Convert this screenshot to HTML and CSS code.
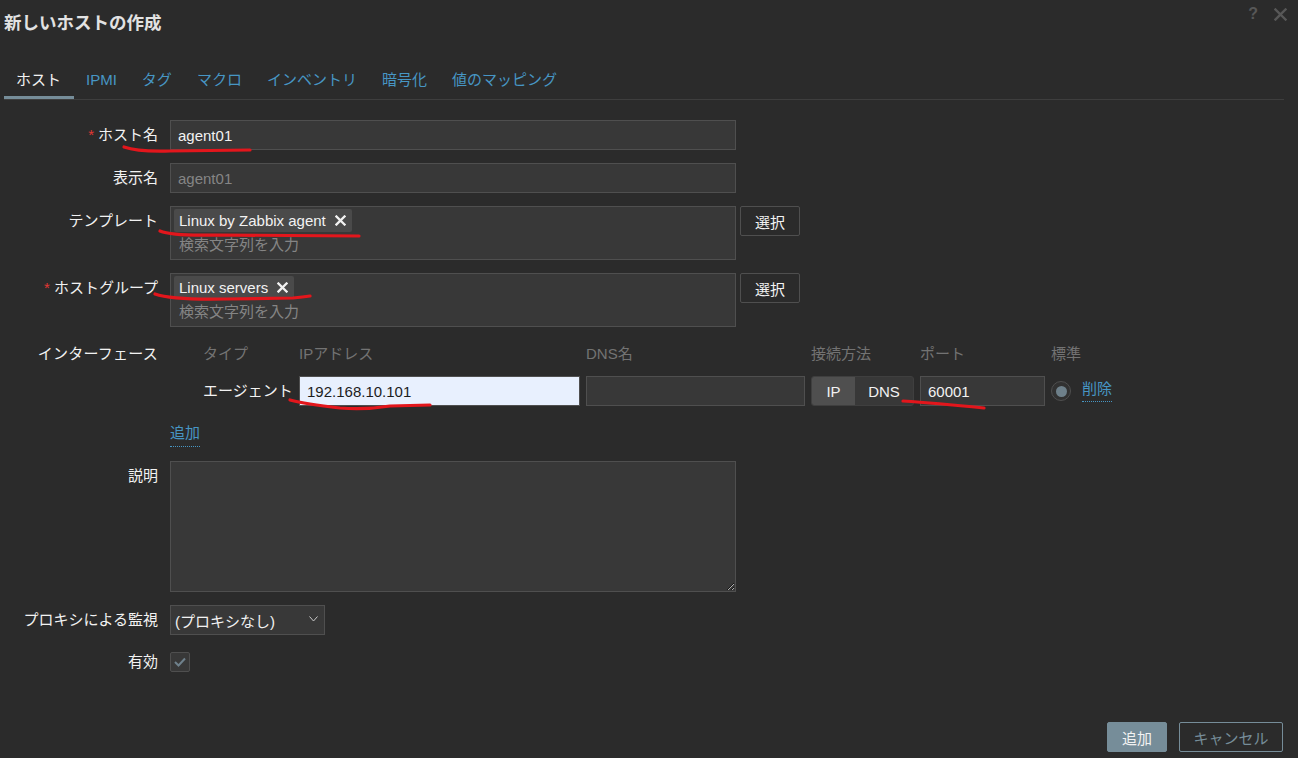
FILE: index.html
```html
<!DOCTYPE html>
<html lang="ja">
<head>
<meta charset="utf-8">
<title>新しいホストの作成</title>
<link rel="stylesheet" href="styles.css">
</head>
<body>
<div class="dialog">
  <header class="head">
    <h1 class="title">新しいホストの作成</h1>
    <div class="head-icons">
      <span class="ico-help">?</span>
      <svg class="ico-close" width="13" height="13" viewBox="0 0 13 13"><path d="M1.5 1.5 L11.5 11.5 M11.5 1.5 L1.5 11.5" stroke="#575757" stroke-width="2.4" stroke-linecap="square"/></svg>
    </div>
  </header>

  <nav class="tabs">
    <a class="tab active">ホスト</a>
    <a class="tab">IPMI</a>
    <a class="tab">タグ</a>
    <a class="tab">マクロ</a>
    <a class="tab">インベントリ</a>
    <a class="tab">暗号化</a>
    <a class="tab">値のマッピング</a>
  </nav>

  <form class="form">
    <label class="lbl req">ホスト名</label>
    <div class="fld"><input class="inp" type="text" value="agent01"></div>

    <label class="lbl">表示名</label>
    <div class="fld"><input class="inp" type="text" placeholder="agent01"></div>

    <label class="lbl">テンプレート</label>
    <div class="fld fld-btn">
      <div class="ms">
        <div class="ms-tags">
          <span class="tag">Linux by Zabbix agent
            <svg class="tag-x" width="11" height="11" viewBox="0 0 11 11"><path d="M1.5 1.5 L9.5 9.5 M9.5 1.5 L1.5 9.5" stroke="#f2f2f2" stroke-width="2.3" stroke-linecap="square"/></svg>
          </span>
        </div>
        <div class="ms-ph">検索文字列を入力</div>
      </div>
      <button type="button" class="btn-alt">選択</button>
    </div>

    <label class="lbl req">ホストグループ</label>
    <div class="fld fld-btn">
      <div class="ms">
        <div class="ms-tags">
          <span class="tag">Linux servers
            <svg class="tag-x" width="11" height="11" viewBox="0 0 11 11"><path d="M1.5 1.5 L9.5 9.5 M9.5 1.5 L1.5 9.5" stroke="#f2f2f2" stroke-width="2.3" stroke-linecap="square"/></svg>
          </span>
        </div>
        <div class="ms-ph">検索文字列を入力</div>
      </div>
      <button type="button" class="btn-alt">選択</button>
    </div>

    <label class="lbl lbl-iface">インターフェース</label>
    <div class="fld">
      <div class="ifc-grid ifc-head">
        <span></span>
        <span>タイプ</span>
        <span>IPアドレス</span>
        <span>DNS名</span>
        <span>接続方法</span>
        <span>ポート</span>
        <span>標準</span>
      </div>
      <div class="ifc-grid ifc-row">
        <span></span>
        <span class="ifc-type">エージェント</span>
        <span><input class="inp inp-ip" type="text" value="192.168.10.101"></span>
        <span><input class="inp inp-dns" type="text" value=""></span>
        <span class="toggle"><span class="tg tg-on">IP</span><span class="tg">DNS</span></span>
        <span><input class="inp inp-port" type="text" value="60001"></span>
        <span class="def">
          <span class="radio"><span class="radio-dot"></span></span>
          <a class="link">削除</a>
        </span>
      </div>
      <div class="add-wrap"><a class="link link-add">追加</a></div>
    </div>

    <label class="lbl">説明</label>
    <div class="fld"><textarea class="ta"></textarea></div>

    <label class="lbl">プロキシによる監視</label>
    <div class="fld">
      <div class="sel">
        <span>(プロキシなし)</span>
        <svg width="9" height="6" viewBox="0 0 9 6"><polyline points="0.5,0.5 4.5,5 8.5,0.5" fill="none" stroke="#c8c8c8" stroke-width="1"/></svg>
      </div>
    </div>

    <label class="lbl lbl-chk">有効</label>
    <div class="fld fld-chk">
      <span class="chk">
        <svg width="12" height="10" viewBox="0 0 12 10"><polyline points="1,5 4.5,8.5 11,1.5" fill="none" stroke="#6f818c" stroke-width="2"/></svg>
      </span>
    </div>
  </form>

  <footer class="foot">
    <button type="button" class="btn btn-primary">追加</button>
    <button type="button" class="btn btn-cancel">キャンセル</button>
  </footer>

  <svg class="marks" width="1298" height="758" viewBox="0 0 1298 758">
    <g fill="none" stroke="#e3161c" stroke-width="3.2" stroke-linecap="round" stroke-linejoin="round">
      <path d="M124 147 Q138 152 170 151 L250 150"/>
      <path d="M160 231 Q172 236 215 235 L359 236"/>
      <path d="M155 294 Q172 300 225 299 L293 298 Q303 297 310 296"/>
      <path d="M290 400 Q305 404 340 408 Q365 410 390 406 L430 405"/>
      <path d="M903 401 Q935 403 984 408"/>
    </g>
  </svg>
</div>
</body>
</html>
```

FILE: styles.css
```css
html, body {
  margin: 0;
  padding: 0;
  background: #2b2b2b;
}

body {
  font-family: "Liberation Sans", "Noto Sans CJK JP", sans-serif;
  font-size: 15px;
  color: #f2f2f2;
}

.dialog {
  position: relative;
  box-sizing: border-box;
  height: 758px;
  padding: 0 14px 0 4px;
  display: flex;
  flex-direction: column;
  overflow: hidden;
}

/* header */
.head {
  height: 46px;
  display: flex;
  align-items: center;
  justify-content: space-between;
}

.title {
  margin: 0;
  font-size: 17.5px;
  font-weight: bold;
  line-height: 46px;
  color: #e2e2e2;
}

.head-icons {
  display: flex;
  align-items: center;
  gap: 16px;
  margin-right: -3px;
  margin-top: -18px;
}

.ico-help {
  font-size: 16px;
  font-weight: bold;
  color: #575757;
  line-height: 16px;
}

.ico-close {
  display: block;
}

/* tabs */
.tabs {
  display: flex;
  margin-top: 17px;
  border-bottom: 1px solid #3e3e3e;
}

.tab {
  padding: 8px 12.5px 7px;
  line-height: 18px;
  color: #4796c4;
  border-bottom: 3px solid transparent;
  text-decoration: none;
  white-space: nowrap;
}

.tab.active {
  padding-left: 12px;
  color: #f2f2f2;
  border-bottom-color: #768d99;
}

/* form */
.form {
  flex: 1;
  display: grid;
  grid-template-columns: 154px 1fr;
  column-gap: 12px;
  row-gap: 13px;
  align-content: start;
  padding-top: 20px;
}

.lbl {
  text-align: right;
  line-height: 30px;
  white-space: nowrap;
  color: #f2f2f2;
}

.req::before {
  content: "*";
  color: #e33734;
  margin-right: 4px;
}

.lbl-iface {
  line-height: 28px;
  letter-spacing: 0.25px;
}

.lbl-chk {
  margin-top: -1px;
}

.fld {
  min-width: 0;
}

.fld-btn {
  display: flex;
  align-items: flex-start;
  gap: 4px;
}

.inp {
  box-sizing: border-box;
  display: block;
  width: 566px;
  height: 30px;
  margin: 0;
  padding: 0 7px;
  background: #383838;
  border: 1px solid #4f4f4f;
  border-radius: 0;
  color: #f2f2f2;
  font-family: inherit;
  font-size: 15px;
  outline: none;
}

.inp::placeholder {
  color: #858585;
  opacity: 1;
}

/* multiselect */
.ms {
  box-sizing: border-box;
  width: 566px;
  height: 54px;
  padding: 2px 3px;
  background: #383838;
  border: 1px solid #4f4f4f;
}

.ms-tags {
  display: flex;
  height: 23px;
}

.tag {
  display: inline-flex;
  align-items: center;
  gap: 9px;
  height: 23px;
  padding: 0 6px 0 5px;
  background: #4a4a4a;
  border-radius: 2px;
  line-height: 18px;
  color: #f2f2f2;
  white-space: nowrap;
}

.tag-x {
  display: block;
}

.ms-ph {
  padding-left: 5px;
  line-height: 26px;
  color: #858585;
}

.btn-alt {
  box-sizing: border-box;
  width: 60px;
  height: 30px;
  margin: 0;
  padding: 0;
  background: #2b2b2b;
  border: 1px solid #4f4f4f;
  border-radius: 2px;
  color: #f2f2f2;
  font-family: inherit;
  font-size: 15px;
}

/* interfaces */
.ifc-grid {
  display: grid;
  grid-template-columns: 33px 96px 287px 225px 109px 131px auto;
  align-items: center;
}

.ifc-head {
  height: 28px;
  line-height: 28px;
  color: #737373;
  white-space: nowrap;
}

.ifc-row {
  margin-top: 8px;
  height: 30px;
}

.ifc-type {
  line-height: 30px;
  white-space: nowrap;
}

.inp-ip {
  width: 281px;
  background: #e8f0fe;
  color: #1c1c1c;
}

.inp-dns {
  width: 219px;
}

.inp-port {
  width: 125px;
}

.toggle {
  box-sizing: border-box;
  display: flex;
  width: 103px;
  height: 30px;
  background: #383838;
  border: 1px solid #3f3f3f;
  border-radius: 3px;
  overflow: hidden;
}

.tg {
  flex: 1;
  display: flex;
  align-items: center;
  justify-content: center;
  color: #f2f2f2;
}

.tg-on {
  flex: 0 0 43px;
  background: #4f4f4f;
}

.def {
  display: flex;
  align-items: center;
  gap: 11px;
}

.radio {
  box-sizing: border-box;
  width: 20px;
  height: 20px;
  border-radius: 50%;
  background: #313131;
  border: 1px solid #4f4f4f;
  display: flex;
  align-items: center;
  justify-content: center;
}

.radio-dot {
  width: 11px;
  height: 11px;
  border-radius: 50%;
  background: #6e808a;
}

.link {
  color: #4796c4;
  text-decoration: none;
  border-bottom: 1px dotted #4796c4;
  line-height: 18px;
  padding-bottom: 3px;
  white-space: nowrap;
}

.add-wrap {
  margin-top: 18px;
  height: 24px;
}

.link-add {
  display: inline-block;
  padding-bottom: 4px;
}

/* textarea */
.ta {
  box-sizing: border-box;
  display: block;
  width: 566px;
  height: 131px;
  margin: 0;
  background: #383838;
  border: 1px solid #4f4f4f;
  border-radius: 0;
  color: #f2f2f2;
  font-family: inherit;
  font-size: 15px;
  resize: both;
  outline: none;
}

/* select */
.sel {
  box-sizing: border-box;
  width: 155px;
  height: 30px;
  padding: 0 6px 0 4px;
  background: #383838;
  border: 1px solid #4f4f4f;
  display: flex;
  align-items: center;
  justify-content: space-between;
  white-space: nowrap;
}

.sel svg {
  display: block;
  margin-top: -3px;
}

/* checkbox */
.fld-chk {
  height: 30px;
}

.chk {
  box-sizing: border-box;
  display: flex;
  align-items: center;
  justify-content: center;
  width: 20px;
  height: 20px;
  margin-top: 4px;
  background: #383838;
  border: 1px solid #4f4f4f;
  border-radius: 2px;
}

/* footer */
.foot {
  display: flex;
  justify-content: flex-end;
  gap: 12px;
  padding: 0 1px 6px 0;
}

.btn {
  box-sizing: border-box;
  height: 30px;
  margin: 0;
  border-radius: 2px;
  font-family: inherit;
  font-size: 15px;
  padding: 0;
}

.btn-primary {
  width: 60px;
  background: #768d99;
  border: 1px solid #768d99;
  color: #f2f2f2;
}

.btn-cancel {
  width: 104px;
  background: transparent;
  border: 1px solid #768d99;
  color: #768d99;
}

/* annotation overlay */
.marks {
  position: absolute;
  left: 0;
  top: 0;
  pointer-events: none;
}
```
